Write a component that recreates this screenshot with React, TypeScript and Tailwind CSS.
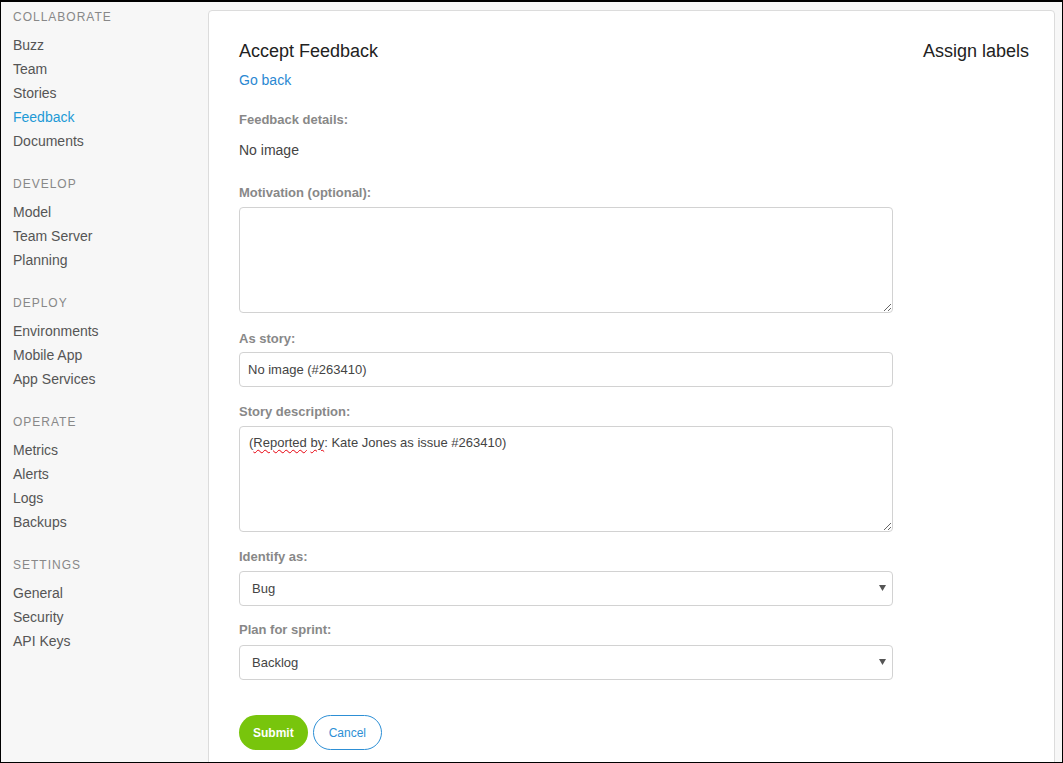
import React from "react";

const groups = [
    { title: "COLLABORATE", items: ["Buzz", "Team", "Stories", "Feedback", "Documents"] },
    { title: "DEVELOP", items: ["Model", "Team Server", "Planning"] },
    { title: "DEPLOY", items: ["Environments", "Mobile App", "App Services"] },
    { title: "OPERATE", items: ["Metrics", "Alerts", "Logs", "Backups"] },
    { title: "SETTINGS", items: ["General", "Security", "API Keys"] },
];

function Label({ children, className = "" }: { children: React.ReactNode; className?: string }) {
    return <div className={`text-[13px] leading-[18px] font-bold text-[#888] ${className}`}>{children}</div>;
}

function Select({ value, className = "" }: { value: string; className?: string }) {
    return (
        <div className={`relative ${className}`}>
            <select
                defaultValue={value}
                className="appearance-none w-full h-[35px] border border-[#d2d2d2] rounded-[4px] bg-white pl-[12px] text-[13px] text-[#444] outline-none"
            >
                <option>{value}</option>
            </select>
            {/* dropdown caret */}
            <svg className="absolute right-[7px] top-[14px] pointer-events-none" width="7" height="6" viewBox="0 0 7 6">
                <path d="M0 0 H7 L3.5 6 Z" fill="#555" />
            </svg>
        </div>
    );
}

export default function App() {
    return (
        <div className="w-[1063px] h-[763px] overflow-hidden border border-t-2 border-black bg-[#f7f7f7] flex" style={{ fontFamily: '"Liberation Sans", Arial, sans-serif' }}>
            {/* sidebar */}
            <div className="w-[207px] shrink-0 pt-[6px] pl-[12px]">
                {groups.map((group) => (
                    <div key={group.title} className="mb-[22px]">
                        <div className="text-[12px] leading-[18px] tracking-[1px] text-[#888] mb-[7px]">{group.title}</div>
                        {group.items.map((item) => (
                            <div
                                key={item}
                                className={`text-[14px] leading-[24px] ${item === "Feedback" ? "text-[#1e9ad6]" : "text-[#555]"}`}
                            >
                                {item}
                            </div>
                        ))}
                    </div>
                ))}
            </div>

            {/* main card */}
            <div className="mt-[8px] w-[847px] shrink-0 h-[800px] bg-white border border-[#dcdcdc] rounded-t-[4px] pl-[30px] pt-[30px] flex">
                <div className="w-[654px] shrink-0">
                    <h1 className="text-[18px] leading-[20px] text-[#222]">Accept Feedback</h1>
                    <div className="mt-[9px] text-[14px] leading-[20px] text-[#2a88d2]">Go back</div>

                    <Label className="mt-[21px]">Feedback details:</Label>
                    <div className="mt-[11px] text-[14px] leading-[20px] text-[#444]">No image</div>

                    <Label className="mt-[24px]">Motivation (optional):</Label>
                    <textarea className="mt-[5px] block w-full h-[106px] border border-[#d2d2d2] rounded-[4px] outline-none px-[9px] py-[8px] text-[13px]" />

                    <Label className="mt-[17px]">As story:</Label>
                    <input
                        defaultValue="No image (#263410)"
                        className="mt-[4px] block w-full h-[35px] border border-[#d2d2d2] rounded-[4px] outline-none px-[8px] text-[13px] text-[#444]"
                    />

                    <Label className="mt-[16px]">Story description:</Label>
                    <div className="mt-[5px] w-full h-[106px] border border-[#d2d2d2] rounded-[4px] px-[9px] py-[8px] text-[13px] leading-[16px] text-[#444] resize overflow-auto">
                        (<span className="underline decoration-wavy decoration-red-600 decoration-1 underline-offset-2">Reported</span>{" "}
                        <span className="underline decoration-wavy decoration-red-600 decoration-1 underline-offset-2">by</span>: Kate Jones as issue #263410)
                    </div>

                    <Label className="mt-[16px]">Identify as:</Label>
                    <Select value="Bug" className="mt-[5px]" />

                    <Label className="mt-[15px]">Plan for sprint:</Label>
                    <Select value="Backlog" className="mt-[6px]" />

                    <div className="mt-[35px] flex gap-[5px]">
                        <button className="h-[35px] px-[14px] rounded-full bg-[#78c50c] text-white text-[12px] font-bold">Submit</button>
                        <button className="h-[35px] px-[15px] rounded-full border border-[#2d8fd5] text-[#2d8fd5] text-[12px] bg-white">Cancel</button>
                    </div>
                </div>

                <div className="ml-[30px] text-[18px] leading-[20px] text-[#222]">Assign labels</div>
            </div>
        </div>
    );
}
